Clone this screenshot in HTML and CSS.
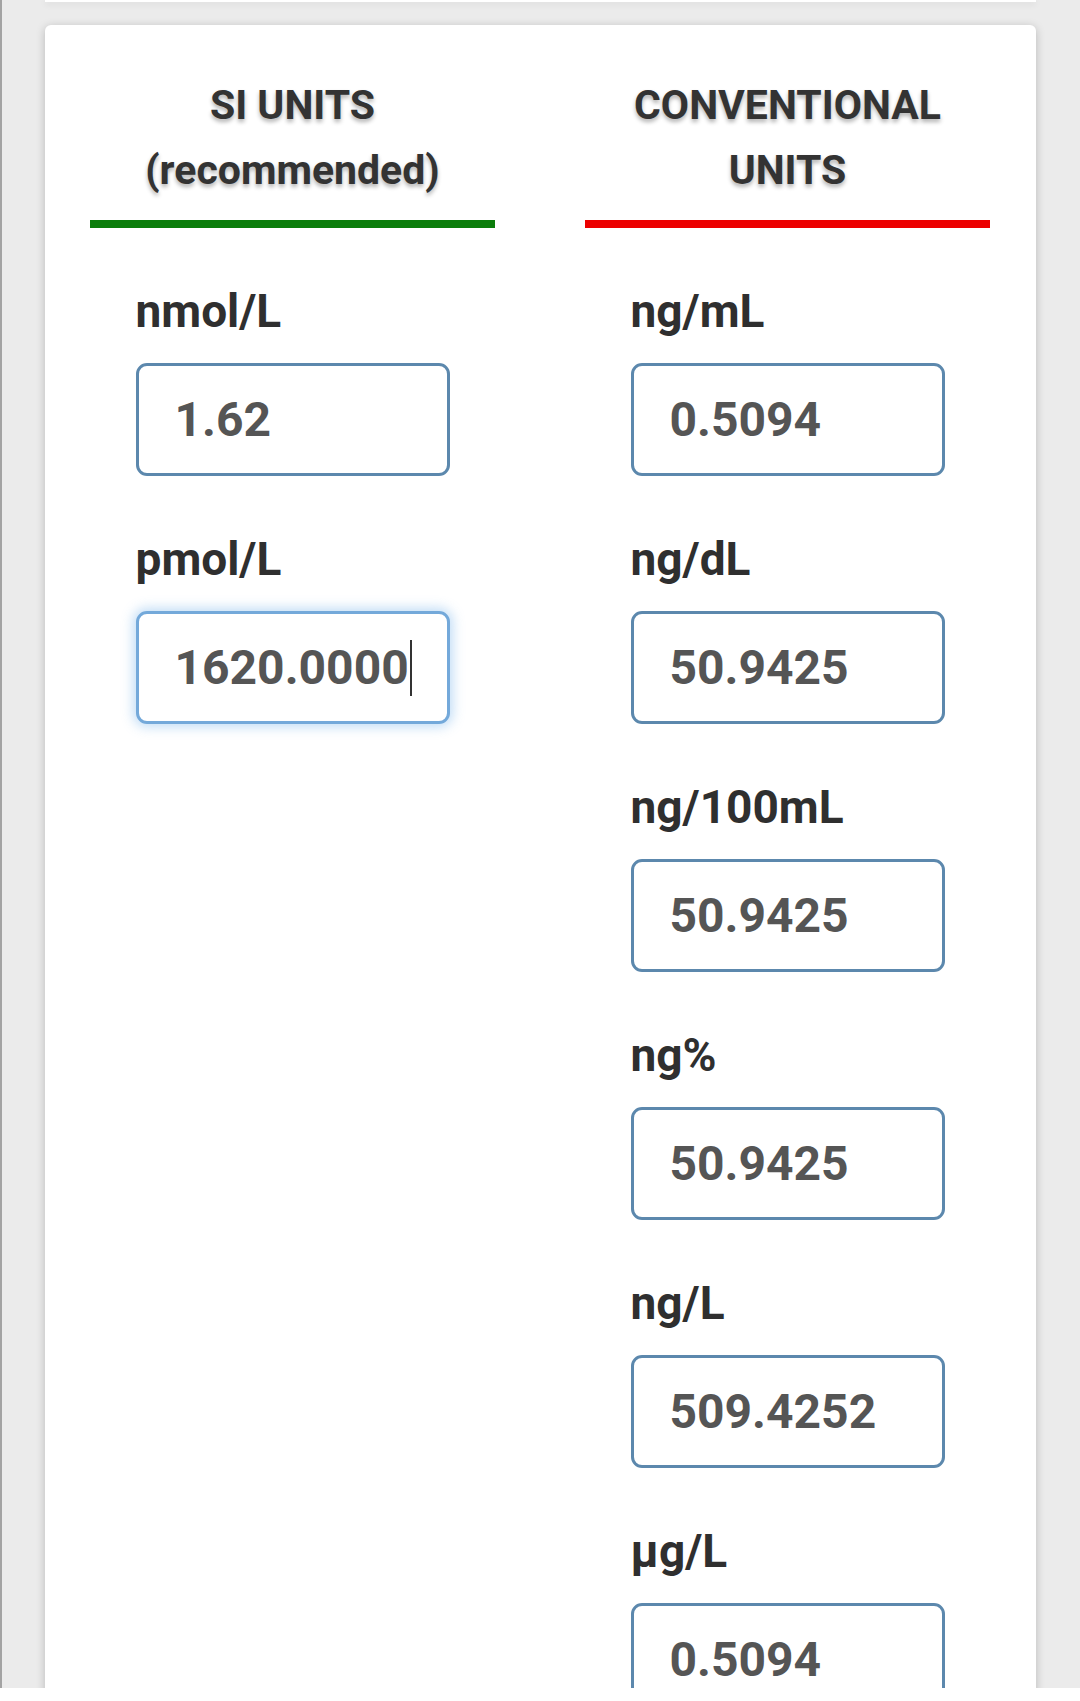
FILE: index.html
```html
<!DOCTYPE html>
<html lang="en">
<head>
    <meta charset="UTF-8">
    <meta name="viewport" content="width=device-width, initial-scale=1.0">
    <title>Unit converter</title>
    <link rel="stylesheet" href="styles.css">
</head>
<body>
    <div class="screen">
        <div class="prev-card"></div>

        <div class="card">
            <div class="column">
                <h2 class="col-title">SI UNITS<br>(recommended)</h2>
                <div class="bar bar-si"></div>
                <div class="fields">
                    <div class="field">
                        <div class="field-label">nmol/L</div>
                        <div class="field-box">1.62</div>
                    </div>
                    <div class="field">
                        <div class="field-label">pmol/L</div>
                        <div class="field-box focused">1620.0000</div>
                    </div>
                </div>
            </div>

            <div class="column">
                <h2 class="col-title">CONVENTIONAL<br>UNITS</h2>
                <div class="bar bar-conv"></div>
                <div class="fields">
                    <div class="field">
                        <div class="field-label">ng/mL</div>
                        <div class="field-box">0.5094</div>
                    </div>
                    <div class="field">
                        <div class="field-label">ng/dL</div>
                        <div class="field-box">50.9425</div>
                    </div>
                    <div class="field">
                        <div class="field-label">ng/100mL</div>
                        <div class="field-box">50.9425</div>
                    </div>
                    <div class="field">
                        <div class="field-label">ng%</div>
                        <div class="field-box">50.9425</div>
                    </div>
                    <div class="field">
                        <div class="field-label">ng/L</div>
                        <div class="field-box">509.4252</div>
                    </div>
                    <div class="field">
                        <div class="field-label">µg/L</div>
                        <div class="field-box">0.5094</div>
                    </div>
                </div>
            </div>
        </div>
    </div>
    <div class="nav-strip"></div>
</body>
</html>
```

FILE: styles.css
```css
* { box-sizing: border-box; margin: 0; padding: 0; }
html, body { width: 1080px; height: 1701px; overflow: hidden; }
body { font-family: Roboto, "Liberation Sans", sans-serif; background: #fff; }

.screen {
    height: 1688px;
    overflow: hidden;
    background: #ebebeb;
    border-left: 2px solid #a3a3a3;
    padding: 0 44px 0 43px;
}
.prev-card {
    height: 2px;
    background: #fff;
    box-shadow: 0 2px 6px rgba(0,0,0,0.12);
}
.card {
    margin-top: 23px;
    background: #fff;
    border-radius: 6px;
    box-shadow: 0 2px 10px rgba(0,0,0,0.22);
    padding: 48px 45px 200px;
    display: grid;
    grid-template-columns: 405px 405px;
    column-gap: 90px;
    align-items: start;
}
.col-title {
    font-size: 41px;
    line-height: 65px;
    font-weight: 700;
    color: #333;
    text-align: center;
    text-shadow: 0 3px 4px rgba(0,0,0,0.3);
}
.bar {
    height: 8px;
    margin-top: 17px;
}
.bar-si { background: #0b7d0b; }
.bar-conv { background: #ec0000; }

.fields {
    width: 314px;
    margin: 0 auto;
    padding-top: 56px;
}
.field { margin-bottom: 56px; }
.field-label {
    font-size: 46px;
    line-height: 54px;
    font-weight: 700;
    color: #2f2f2f;
    margin-bottom: 25px;
}
.field-box {
    height: 113px;
    border: 3px solid #5c88ad;
    border-radius: 11px;
    padding-left: 36px;
    display: flex;
    align-items: center;
    font-size: 48px;
    font-weight: 700;
    color: #555;
    background: #fff;
}
.field-box.focused {
    border-color: #74a9da;
    box-shadow: 0 0 12px 3px rgba(120,180,235,0.45);
}
.field-box.focused::after {
    content: "";
    display: inline-block;
    width: 2px;
    height: 56px;
    margin-left: 1px;
    background: #333;
}
.nav-strip {
    height: 13px;
    background: #fff;
}
```
